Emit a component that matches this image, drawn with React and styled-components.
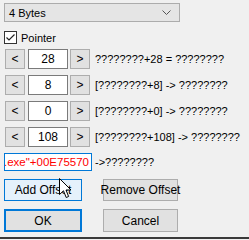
import React from 'react'
import styled, { createGlobalStyle } from 'styled-components'

const GlobalStyle = createGlobalStyle`
  html, body {
    margin: 0;
    background: #f0f0f0;
  }
  body {
    font-family: "Liberation Sans", Arial, sans-serif;
    font-size: 11px;
    color: #000;
  }
`

const Page = styled.div`
  position: relative;
  box-sizing: border-box;
  height: 239px;
  width: 249px;
  padding: 3px 0 0 4px;
  border-bottom: 2px solid #3a3a3a;
  display: flex;
  flex-direction: column;
`

const Combo = styled.div`
  box-sizing: border-box;
  width: 176px;
  height: 19px;
  background: #e5e5e5;
  border: 1px solid #acacac;
  display: flex;
  align-items: center;
  justify-content: space-between;
  padding: 0 8px 0 4px;
`

const CheckRow = styled.label`
  display: flex;
  align-items: center;
  gap: 4px;
  margin-top: 9px;
  height: 13px;
`

const Box = styled.span`
  box-sizing: border-box;
  width: 13px;
  height: 13px;
  background: #fff;
  border: 1px solid #333;
  display: flex;
  align-items: center;
  justify-content: center;
`

const Rows = styled.div`
  display: flex;
  flex-direction: column;
  gap: 6px;
  margin-top: 5px;
`

const Row = styled.div`
  display: flex;
  align-items: center;
  height: 20px;
`

const StepButton = styled.div`
  box-sizing: border-box;
  width: 20px;
  height: 20px;
  margin-left: ${p => p.$left || 0}px;
  background: #e1e1e1;
  border: 1px solid #adadad;
  display: flex;
  align-items: center;
  justify-content: center;
  font-size: 12px;
`

const Num = styled.div`
  box-sizing: border-box;
  width: 40px;
  height: 20px;
  margin: 0 2px 0 3px;
  background: #fff;
  border: 1px solid #7a7a7a;
  display: flex;
  align-items: center;
  justify-content: center;
  font-size: 12px;
`

const Note = styled.span`
  margin-left: ${p => p.$left}px;
  white-space: nowrap;
`

const AddrRow = styled.div`
  display: flex;
  align-items: center;
  margin-top: 6px;
  height: 18px;
`

const Addr = styled.div`
  box-sizing: border-box;
  width: 88px;
  height: 18px;
  background: #fff;
  border: 1px solid #0078d7;
  color: #ff0000;
  font-size: 11.5px;
  overflow: hidden;
  display: flex;
  align-items: center;
  justify-content: flex-end;
  padding-right: 2px;
  white-space: nowrap;
`

const Caret = styled.span`
  display: inline-block;
  width: 1px;
  height: 13px;
  background: #000;
  vertical-align: middle;
`

const ButtonRow = styled.div`
  display: flex;
  gap: 21px;
  margin-top: ${p => p.$top}px;
`

const Button = styled.div`
  box-sizing: border-box;
  width: ${p => p.$w}px;
  height: ${p => p.$h || 22}px;
  background: ${p => (p.$hover ? '#e5f1fb' : '#e1e1e1')};
  border: ${p => (p.$def ? '2px solid #0078d7' : p.$hover ? '1px solid #0078d7' : '1px solid #adadad')};
  display: flex;
  align-items: center;
  justify-content: center;
  white-space: nowrap;
  font-size: 12px;
`

const Cursor = styled.svg`
  position: absolute;
  left: 59px;
  top: 178px;
`

export default function App() {
  const rows = [
    { v: '28', t: '????????+28 = ????????' },
    { v: '8', t: '[????????+8] -> ????????' },
    { v: '0', t: '[????????+0] -> ????????' },
    { v: '108', t: '[????????+108] -> ????????' },
  ]
  return (
    <>
      <GlobalStyle />
      <Page>
        <Combo>
          <span>4 Bytes</span>
          <svg width="9" height="5" viewBox="0 0 9 5">
            <path d="M0.5 0.5 L4.5 4.5 L8.5 0.5" fill="none" stroke="#555" strokeWidth="1" />
          </svg>
        </Combo>
        <CheckRow>
          <Box>
            <svg width="11" height="11" viewBox="0 0 11 11">
              <path d="M1.5 5.5 L4 8 L9.5 2.5" fill="none" stroke="#222" strokeWidth="1.2" />
            </svg>
          </Box>
          <span>Pointer</span>
        </CheckRow>
        <Rows>
          {rows.map(r => (
            <Row key={r.v}>
              <StepButton $left={1}>&lt;</StepButton>
              <Num>{r.v}</Num>
              <StepButton>&gt;</StepButton>
              <Note $left={5}>{r.t}</Note>
            </Row>
          ))}
        </Rows>
        <AddrRow>
          <Addr>
            <span>"game.exe"+00E</span>
            <Caret />
            <span>75570</span>
          </Addr>
          <Note $left={3}>-&gt;????????</Note>
        </AddrRow>
        <ButtonRow $top={8}>
          <Button $w={78} $hover>Add Offset</Button>
          <Button $w={75}>Remove Offset</Button>
        </ButtonRow>
        <ButtonRow $top={8}>
          <Button $w={78} $h={23} $def>OK</Button>
          <Button $w={75} $h={23}>Cancel</Button>
        </ButtonRow>
        <Cursor width="13" height="21" viewBox="0 0 13 21">
          <path
            d="M0.5 0.5 L0.5 16.5 L4.5 12.8 L7.2 19.5 L9.6 18.5 L7 12 L12 12 Z"
            fill="#fff"
            stroke="#000"
            strokeWidth="1"
            strokeLinejoin="round"
          />
        </Cursor>
      </Page>
    </>
  )
}
